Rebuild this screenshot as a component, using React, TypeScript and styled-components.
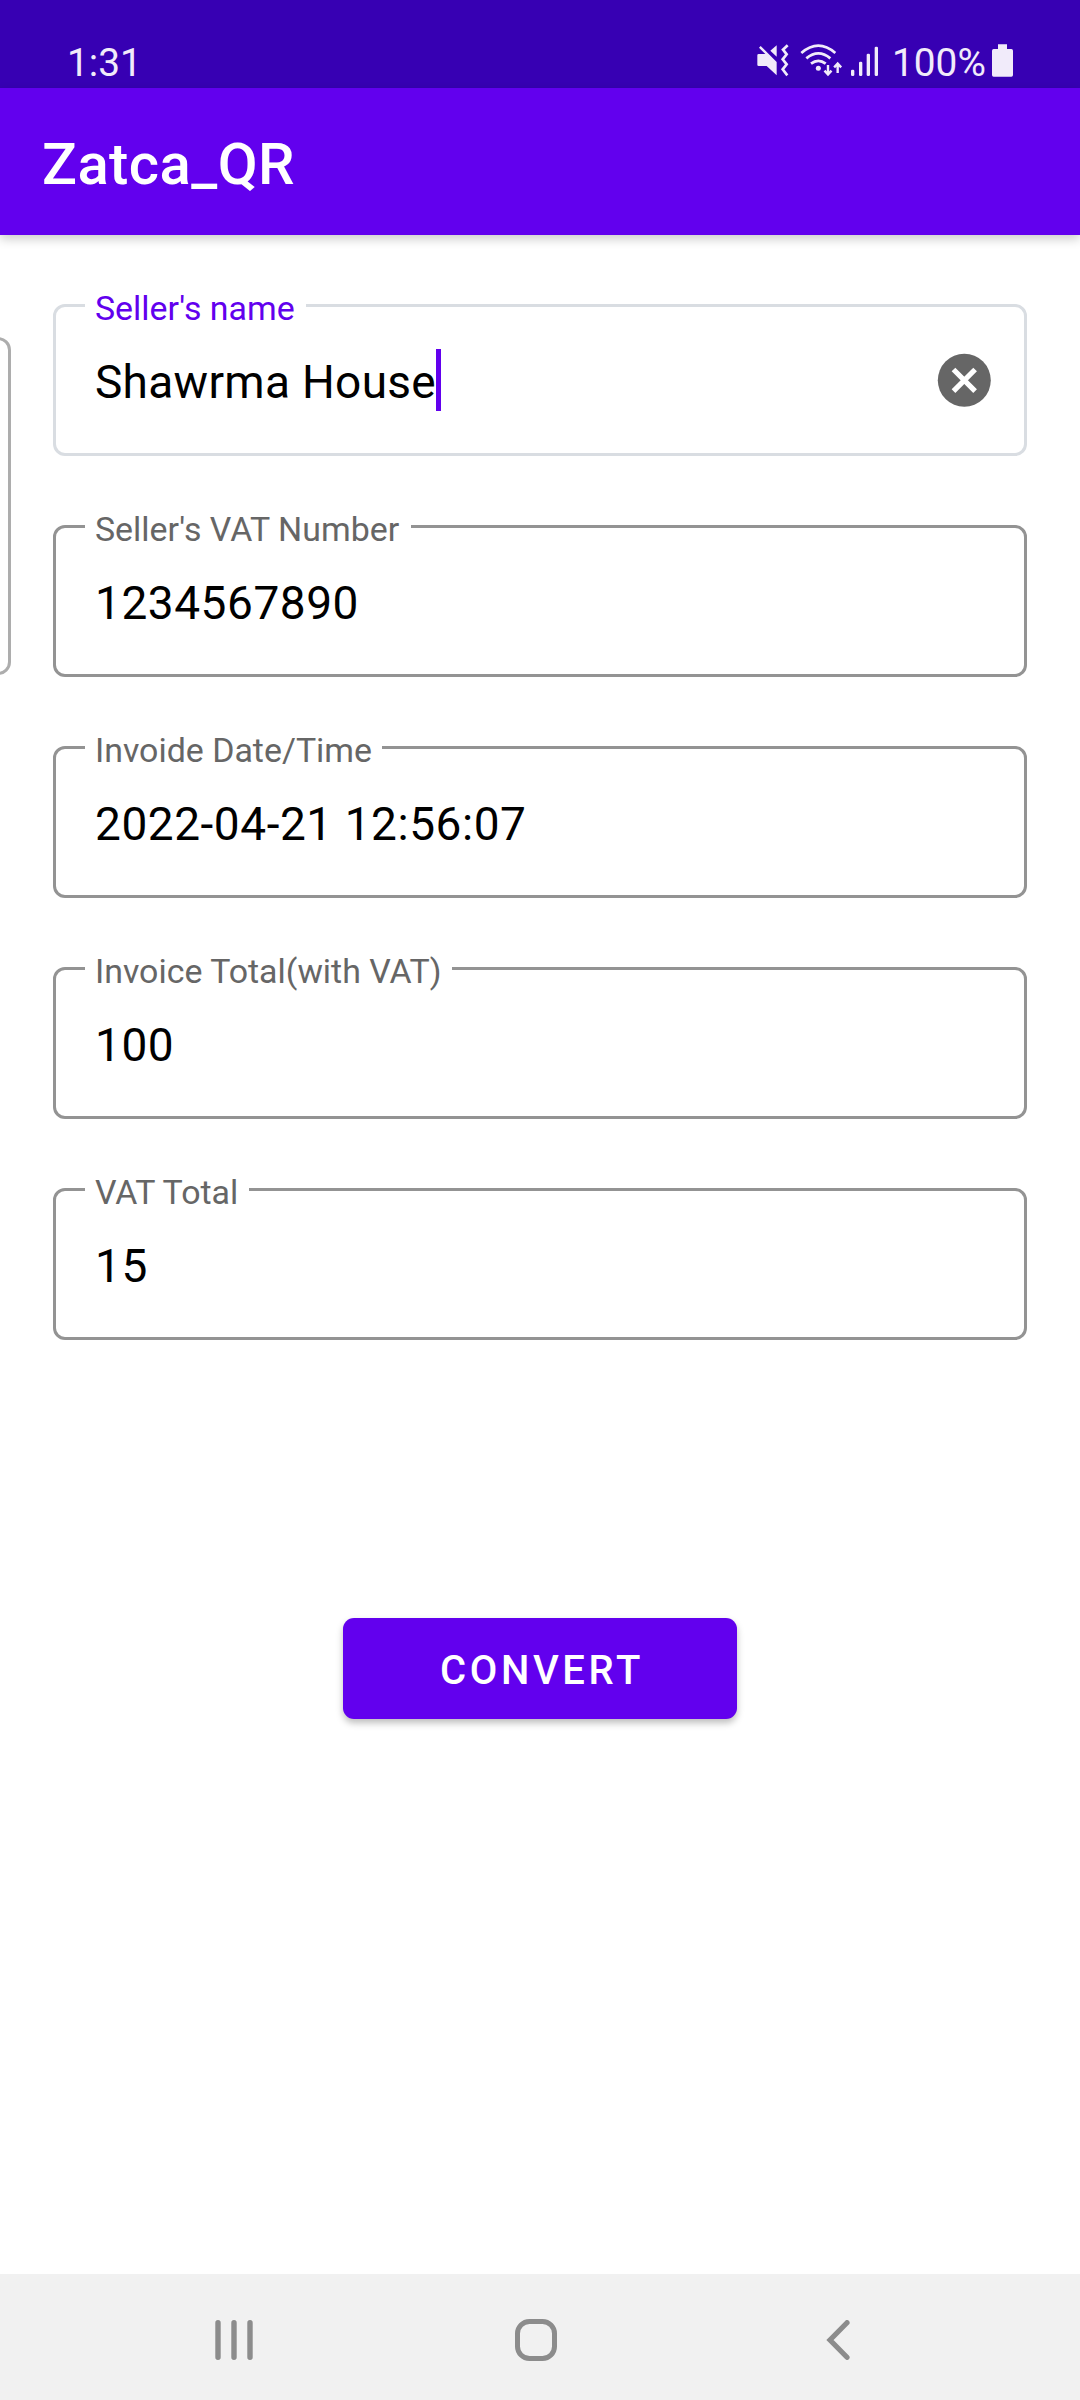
import React from 'react';
import styled, { createGlobalStyle } from 'styled-components';

const GlobalStyle = createGlobalStyle`
  * { box-sizing: border-box; }
  body { margin: 0; background: #fff; font-family: Roboto, "Liberation Sans", sans-serif; }
`;

const Screen = styled.div`
  position: relative;
  display: flex;
  flex-direction: column;
  width: 1080px;
  height: 2400px;
  background: #fff;
  overflow: hidden;
`;

const StatusBar = styled.header`
  display: flex;
  justify-content: space-between;
  flex: none;
  height: 88px;
  padding: 34px 66px 0 67px;
  background: #3700b3;
  color: #f1ebfa;
`;

const StatusText = styled.span`
  font-size: 38.8px;
  line-height: 58px;
  white-space: nowrap;
`;

const StatusIcons = styled.div`
  display: flex;
  align-items: flex-start;
`;

const StatusGlyph = styled.svg<{ $gap: number }>`
  display: block;
  flex: none;
  height: 35px;
  margin-top: 9px;
  margin-left: ${(p) => p.$gap}px;
`;

const Percent = styled(StatusText)`
  width: 97px;
  margin-left: 13px;
`;

const AppBar = styled.div`
  flex: none;
  height: 147px;
  padding-left: 42px;
  background: #6200ee;
  box-shadow: 0 4px 10px rgba(0, 0, 0, 0.2);
`;

const Title = styled.h1`
  margin: 0;
  color: #fff;
  font-size: 58px;
  font-weight: 500;
  line-height: 153px;
  letter-spacing: 0.43px;
`;

const Form = styled.main`
  display: flex;
  flex-direction: column;
  align-items: center;
  flex: 1;
  padding: 69px 53px 0;
`;

const FieldList = styled.div`
  display: flex;
  flex-direction: column;
  gap: 69px;
  width: 100%;
`;

const FieldBox = styled.div<{ $focused?: boolean }>`
  position: relative;
  display: flex;
  align-items: flex-start;
  height: 152px;
  padding: 42px 33px 0 39px;
  border: 3px solid ${(p) => (p.$focused ? '#d9dde2' : '#939393')};
  border-radius: 12px;
`;

const FieldLabel = styled.label<{ $focused?: boolean; $notch: number }>`
  position: absolute;
  top: -18px;
  left: 29px;
  width: ${(p) => p.$notch}px;
  padding-left: 10px;
  background: #fff;
  color: ${(p) => (p.$focused ? '#6200ee' : '#666')};
  font-size: 33.9px;
  line-height: 40px;
  white-space: nowrap;
`;

const FieldValue = styled.span<{ $tracking: number }>`
  color: #000;
  font-size: 46px;
  line-height: 67px;
  letter-spacing: ${(p) => p.$tracking}px;
  white-space: nowrap;
`;

const Caret = styled.span`
  flex: none;
  width: 5px;
  height: 62px;
  background: #6200ee;
`;

const ClearButton = styled.button`
  display: block;
  width: 54px;
  height: 54px;
  margin: 4px 0 0 auto;
  padding: 0;
  border: 0;
  background: none;
`;

const ConvertButton = styled.button`
  width: 394px;
  height: 101px;
  margin-top: 278px;
  padding: 4px 0 0 4px;
  border: 0;
  border-radius: 11px;
  background: #6200ee;
  box-shadow: 0 4px 7px rgba(0, 0, 0, 0.26);
  color: #fff;
  font-family: inherit;
  font-size: 40px;
  font-weight: 500;
  letter-spacing: 3.6px;
`;

const EdgeHandle = styled.div`
  position: absolute;
  left: -30px;
  top: 337px;
  width: 41px;
  height: 338px;
  border: 3px solid #adadad;
  border-radius: 13px;
`;

const NavBar = styled.nav`
  display: flex;
  flex: none;
  height: 126px;
  padding-left: 83px;
  background: #f1f1f1;
`;

const NavItem = styled.div`
  display: flex;
  align-items: center;
  justify-content: center;
  width: 302px;
  padding-top: 6px;
`;

type FieldData = {
  label: string;
  value: string;
  notch: number;
  tracking: number;
  focused?: boolean;
};

const fields: FieldData[] = [
  { label: "Seller's name", value: 'Shawrma House', notch: 221, tracking: 0.3, focused: true },
  { label: "Seller's VAT Number", value: '1234567890', notch: 326, tracking: 0.55 },
  { label: 'Invoide Date/Time', value: '2022-04-21 12:56:07', notch: 297, tracking: 0.55 },
  { label: 'Invoice Total(with VAT)', value: '100', notch: 367, tracking: 0.55 },
  { label: 'VAT Total', value: '15', notch: 164, tracking: 0.55 },
];

const signalBars = [
  { x: 333, y: 119 },
  { x: 357, y: 95 },
  { x: 380, y: 71 },
  { x: 404, y: 50 },
];

function Field({ label, value, notch, tracking, focused }: FieldData) {
  return (
    <FieldBox $focused={focused}>
      <FieldLabel $focused={focused} $notch={notch}>{label}</FieldLabel>
      <FieldValue $tracking={tracking}>{value}</FieldValue>
      {focused && (
        <>
          <Caret />
          <ClearButton aria-label="Clear text">
            <svg width="54" height="54" viewBox="0 0 54 54">
              <circle cx="27.3" cy="27.3" r="26.5" fill="#666" />
              <path d="M16.5 16.5L38.1 38.1M38.1 16.5L16.5 38.1" stroke="#fff" strokeWidth="5.2" />
            </svg>
          </ClearButton>
        </>
      )}
    </FieldBox>
  );
}

export default function App() {
  return (
    <Screen>
      <GlobalStyle />
      <StatusBar>
        <StatusText>1:31</StatusText>
        <StatusIcons>
          <StatusGlyph $gap={0} width="34" viewBox="48 39 102 105" fill="currentColor">
            <path d="M56 72H76L57 53L62 48L110 96V136L80 108H56q-4 0-4-4V76q0-4 4-4z" />
            <path d="M91 62L110 46V80z" />
            <path d="M143 46L129 59L140 73L128 88L140 103L128 118L142 136" fill="none" stroke="currentColor" strokeWidth="8" />
          </StatusGlyph>
          <StatusGlyph $gap={10} width="44" viewBox="180 39 132 105" fill="none" stroke="currentColor" strokeWidth="8.2">
            <path d="M184 69Q235 25 286 69M199 85Q235 55 271 85M213 101Q235 84 257 101" />
            <circle cx="235" cy="115" r="7.5" fill="currentColor" stroke="none" />
            <path d="M264 105V133M253.500 122L264 133.500L274.500 122M293 129V101M282.500 112L293 100.500L303.500 112" strokeWidth="7.2" />
          </StatusGlyph>
          <StatusGlyph $gap={6} width="29" viewBox="330 39 87 105" fill="currentColor">
            {signalBars.map((b) => (
              <rect key={b.x} x={b.x} y={b.y} width="10" height={138 - b.y} rx="4" />
            ))}
          </StatusGlyph>
          <Percent>100%</Percent>
          <StatusGlyph $gap={2} width="23" viewBox="753 39 69 105" fill="currentColor">
            <path d="M774 43H801V57H814q5 0 5 5V135q0 5-5 5H761q-5 0-5-5V62q0-5 5-5H774z" />
          </StatusGlyph>
        </StatusIcons>
      </StatusBar>
      <AppBar>
        <Title>Zatca_QR</Title>
      </AppBar>
      <Form>
        <FieldList>
          {fields.map((f) => (
            <Field key={f.label} {...f} />
          ))}
        </FieldList>
        <ConvertButton>CONVERT</ConvertButton>
      </Form>
      <NavBar>
        <NavItem>
          <svg width="38" height="40" viewBox="0 0 38 40" stroke="#8c8c8c" strokeWidth="5.4" strokeLinecap="round">
            <path d="M3 2.7V37.3M19 2.7V37.3M35 2.7V37.3" />
          </svg>
        </NavItem>
        <NavItem>
          <svg width="42" height="42" viewBox="0 0 42 42" fill="none" stroke="#8c8c8c" strokeWidth="5">
            <rect x="2.5" y="2.5" width="37" height="37" rx="12" />
          </svg>
        </NavItem>
        <NavItem>
          <svg width="24" height="40" viewBox="0 0 24 40" fill="none" stroke="#8c8c8c" strokeWidth="5.2" strokeLinecap="round">
            <path d="M21 2.7L4 20L21 37.3" />
          </svg>
        </NavItem>
      </NavBar>
      <EdgeHandle />
    </Screen>
  );
}
